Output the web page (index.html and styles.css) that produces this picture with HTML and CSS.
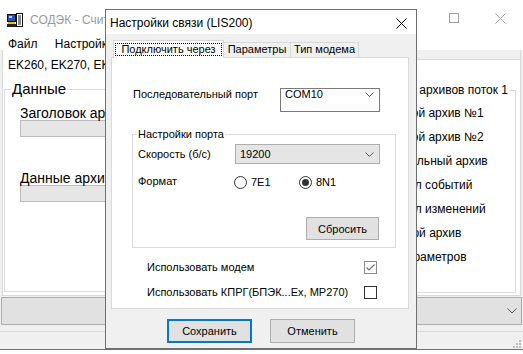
FILE: index.html
```html
<!DOCTYPE html>
<html>
<head>
<meta charset="utf-8">
<meta name="viewport" content="width=device-width">
<title>СОДЭК - Считывание архивов</title>
<link rel="stylesheet" href="styles.css">
</head>
<body>

<div class="app">
  <div class="app-title">
    <svg class="app-icon" width="16" height="15" viewBox="0 0 16 15">
      <rect x="0.5" y="1.5" width="8" height="7" fill="#2a4fc0" stroke="#111"/>
      <rect x="2" y="3" width="3" height="2" fill="#a8d4ff"/>
      <rect x="1" y="9" width="7" height="2" fill="#e8c020"/>
      <rect x="0" y="11" width="9" height="3" fill="#222"/>
      <rect x="9.5" y="0.5" width="6" height="13" fill="#fff" stroke="#111"/>
      <path d="M11 3h3M11 5h3M11 7h3M11 9h3M11 11h3" stroke="#111"/>
    </svg>
    <span class="app-name">СОДЭК - Считывание</span>
    <div class="win-btns">
      <span class="win-btn"><svg width="10" height="10"><path d="M0 5.5h10" stroke="#a0a0a0"/></svg></span>
      <span class="win-btn"><svg width="10" height="10"><rect x="0.5" y="0.5" width="9" height="9" fill="none" stroke="#a0a0a0"/></svg></span>
      <span class="win-btn"><svg width="11" height="11"><path d="M0.5 0.5L10.5 10.5M10.5 0.5L0.5 10.5" stroke="#a0a0a0"/></svg></span>
    </div>
  </div>

  <div class="menubar">
    <span>Файл</span>
    <span>Настройки</span>
  </div>

  <div class="workspace">
    <div class="ws-tabs">
      <div class="ws-tab">EK260, EK270, EK280</div>
      <div class="ws-tabfill"></div>
    </div>
    <div class="ws-content">
      <fieldset class="group data-group">
        <legend>Данные</legend>
        <div class="field-label">Заголовок архивов</div>
        <div class="field-box"></div>
        <div class="field-label second">Данные архивов</div>
        <div class="field-box"></div>
      </fieldset>

      <fieldset class="group arch-group">
        <legend>Чтение архивов поток 1</legend>
        <div class="arch-item">Часовой архив №1</div>
        <div class="arch-item">Часовой архив №2</div>
        <div class="arch-item">Контрольный архив</div>
        <div class="arch-item">Журнал событий</div>
        <div class="arch-item">Журнал изменений</div>
        <div class="arch-item">Дневной архив</div>
        <div class="arch-item">Лог параметров</div>
      </fieldset>
    </div>
  </div>

  <div class="app-combo">
    <svg width="10" height="6"><path d="M0.5 0.5L5 5L9.5 0.5" fill="none" stroke="#555"/></svg>
  </div>

  <div class="statusbar">
    <svg width="8" height="8">
      <rect x="6" y="0" width="2" height="2" fill="#bdbdbd"/>
      <rect x="3" y="3" width="2" height="2" fill="#bdbdbd"/>
      <rect x="6" y="3" width="2" height="2" fill="#bdbdbd"/>
      <rect x="0" y="6" width="2" height="2" fill="#bdbdbd"/>
      <rect x="3" y="6" width="2" height="2" fill="#bdbdbd"/>
      <rect x="6" y="6" width="2" height="2" fill="#bdbdbd"/>
    </svg>
  </div>
</div>

<div class="dialog">
  <div class="dlg-title">
    <span class="dlg-caption">Настройки связи (LIS200)</span>
    <svg class="dlg-close" width="11" height="11" viewBox="0 0 11 11"><path d="M0.5 0.5L10.5 10.5M10.5 0.5L0.5 10.5" stroke="#000"/></svg>
  </div>

  <div class="dlg-body">
    <div class="tabs">
      <div class="tab active"><span>Подключить через</span></div>
      <div class="tab params">Параметры</div>
      <div class="tab modem">Тип модема</div>
    </div>

    <div class="tab-page">
      <div class="port-row">
        <span class="port-label">Последовательный порт</span>
        <div class="combo">
          <span>COM10</span>
          <svg class="chev" width="9" height="5"><path d="M0.5 0.5L4.5 4.5L8.5 0.5" fill="none" stroke="#555"/></svg>
        </div>
      </div>

      <fieldset class="port-group">
        <legend>Настройки порта</legend>
        <div class="speed-row">
          <span class="row-label">Скорость (б/с)</span>
          <div class="combo gray">
            <span>19200</span>
            <svg class="chev" width="9" height="5"><path d="M0.5 0.5L4.5 4.5L8.5 0.5" fill="none" stroke="#555"/></svg>
          </div>
        </div>
        <div class="format-row">
          <span class="row-label fmt">Формат</span>
          <label class="radio"><span class="radio-mark"></span>7E1</label>
          <label class="radio"><span class="radio-mark checked"></span>8N1</label>
        </div>
        <div class="reset-row">
          <button class="btn reset">Сбросить</button>
        </div>
      </fieldset>

      <div class="check-row first">
        <span class="check-label">Использовать модем</span>
        <span class="check-box checked">
          <svg width="11" height="11"><path d="M1.5 5.5L4 8L9.5 2.5" fill="none" stroke="#707070" stroke-width="1.2"/></svg>
        </span>
      </div>
      <div class="check-row">
        <span class="check-label">Использовать КПРГ(БПЭК...Ex, МР270)</span>
        <span class="check-box"></span>
      </div>
    </div>

    <div class="dlg-buttons">
      <button class="btn default">Сохранить</button>
      <button class="btn">Отменить</button>
    </div>
  </div>
</div>

</body>
</html>
```

FILE: styles.css
```css
* {
  box-sizing: border-box;
}
body {
  margin: 0;
  width: 523px;
  height: 354px;
  overflow: hidden;
  position: relative;
  background-color: #fff;
  font-family: "Liberation Sans", Arial, sans-serif;
}

/* main window in the background */
.app {
  width: 523px;
  height: 350px;
  display: flex;
  flex-direction: column;
  background-color: #f0f0f0;
  border-bottom: 1px solid #707070;
}
.app-title {
  height: 30px;
  display: flex;
  align-items: flex-start;
  background-color: #fff;
  color: #9a9a9a;
  font-size: 12px;
  line-height: 14px;
}
.app-icon {
  margin: 13px 7px 0 7px;
}
.app-name {
  flex: 1;
  padding-top: 13px;
}
.win-btns {
  display: flex;
}
.win-btn {
  width: 46px;
  display: flex;
  justify-content: center;
  padding-top: 13px;
}
.menubar {
  height: 20px;
  padding: 8px 0 0 1px;
  background-color: #fff;
  font-size: 12px;
  line-height: 12px;
}
.menubar span {
  padding: 0 7px;
}
.workspace {
  height: 246px;
  margin: 0 2px;
  border: 1px solid #d9d9d9;
  border-top: none;
  background-color: #fff;
}
.ws-tabs {
  height: 26px;
  display: flex;
  align-items: flex-start;
}
.ws-tab {
  width: 250px;
  padding: 8px 0 0 5px;
  font-size: 12px;
  line-height: 15px;
}
.ws-tabfill {
  flex: 1;
  height: 10px;
  background-color: #f0f0f0;
  border-bottom: 1px solid #d9d9d9;
}
.ws-content {
  display: flex;
  justify-content: space-between;
  align-items: flex-start;
  padding: 5px 4px 0 1px;
}
.group {
  margin: 0;
  border: 1px solid #dcdcdc;
  min-width: 0;
}
.data-group {
  width: 300px;
  height: 211px;
  padding: 0 0 0 15px;
}
.data-group legend {
  font-size: 15px;
  line-height: 16px;
  padding: 0 1px;
  margin-left: -9px;
}
.field-label {
  margin-top: 9px;
  font-size: 14px;
  line-height: 14px;
}
.field-label.second {
  margin-top: 34px;
}
.field-box {
  width: 270px;
  height: 17px;
  background-color: #e6e6e6;
  border: 1px solid #bcbcbc;
}
.arch-group {
  width: 176px;
  height: 211px;
  margin-top: 1px;
  padding: 3px 6px 0 4px;
  font-size: 12px;
}
.arch-group legend {
  line-height: 16px;
  padding: 0 1px;
  margin-left: auto;
  margin-right: 0;
  white-space: nowrap;
}
.arch-item {
  line-height: 24px;
  padding-left: 33px;
  white-space: nowrap;
}
.app-combo {
  height: 28px;
  margin: 1px 1px 0 1px;
  display: flex;
  justify-content: flex-end;
  align-items: center;
  padding-right: 4px;
  background-color: #e1e1e1;
  border: 1px solid #adadad;
}
.statusbar {
  height: 18px;
  margin-top: 6px;
  display: flex;
  justify-content: flex-end;
  align-items: flex-end;
  padding: 0 2px 1px 0;
  border-top: 1px solid #d9d9d9;
}

/* dialog window */
.dialog {
  position: absolute;
  left: 105px;
  top: 9px;
  width: 312px;
  height: 340px;
  border: 1px solid #6f6f6f;
  background-color: #f0f0f0;
  font-size: 11px;
  color: #000;
}
.dlg-title {
  height: 24px;
  display: flex;
  justify-content: space-between;
  align-items: flex-start;
  background-color: #fff;
  padding-left: 4px;
  font-size: 12px;
  line-height: 14px;
}
.dlg-caption {
  padding-top: 6px;
}
.dlg-close {
  margin: 8px 9px 0 0;
}
.dlg-body {
  padding: 6px 7px 5px 5px;
}
.tabs {
  height: 18px;
  display: flex;
  align-items: flex-end;
  margin-bottom: -1px;
  padding-left: 2px;
  position: relative;
  z-index: 1;
}
.tab {
  height: 15px;
  margin-bottom: 1px;
  margin-left: -1px;
  border: 1px solid #d9d9d9;
  border-bottom: none;
  background-color: #f0f0f0;
  text-align: center;
  line-height: 13px;
}
.tab.active {
  width: 111px;
  height: 18px;
  margin: 0;
  padding-top: 2px;
  background-color: #fff;
  position: relative;
  z-index: 2;
}
.tab.active span {
  display: inline-block;
  border: 1px dotted #000;
  padding: 0 5px;
  line-height: 11px;
}
.tab.params {
  width: 68px;
}
.tab.modem {
  width: 69px;
}
.tab-page {
  height: 252px;
  border: 1px solid #d9d9d9;
  background-color: #fff;
}
.port-row {
  display: flex;
  align-items: flex-start;
  margin-top: 30px;
  padding-left: 21px;
}
.port-label {
  width: 147px;
  padding-top: 1px;
  line-height: 11px;
}
.combo {
  width: 100px;
  height: 24px;
  display: flex;
  justify-content: space-between;
  align-items: flex-start;
  padding: 0 5px 0 4px;
  border: 1px solid #7a7a7a;
  background-color: #fff;
  line-height: 11px;
}
.combo .chev {
  margin-top: 3px;
}
.combo.gray {
  width: 145px;
  height: 20px;
  align-items: center;
  background-color: #e5e5e5;
  border-color: #adadad;
}
.combo.gray .chev {
  margin-top: 0;
}
.port-group {
  margin: 16px 12px 0 20px;
  padding: 0 15px 7px 5px;
  border: 1px solid #dcdcdc;
  min-width: 0;
}
.port-group legend {
  line-height: 13px;
  padding: 0 1px;
  margin-left: -1px;
}
.speed-row {
  height: 20px;
  margin-top: 3px;
  display: flex;
  align-items: center;
}
.row-label {
  width: 97px;
  line-height: 13px;
}
.row-label.fmt {
  width: 96px;
  margin-top: -2px;
}
.format-row {
  height: 16px;
  margin-top: 10px;
  display: flex;
  align-items: center;
}
.radio {
  width: 65px;
  display: flex;
  align-items: center;
  gap: 4px;
  line-height: 13px;
}
.radio-mark {
  width: 13px;
  height: 13px;
  border: 1px solid #333;
  border-radius: 50%;
  background-color: #fff;
  display: grid;
  place-items: center;
}
.radio-mark.checked::after {
  content: "";
  width: 7px;
  height: 7px;
  border-radius: 50%;
  background-color: #333;
}
.reset-row {
  display: flex;
  justify-content: flex-end;
  margin-top: 27px;
}
.btn {
  font-family: "Liberation Sans", Arial, sans-serif;
  font-size: 11px;
  color: #000;
  background-color: #e1e1e1;
  border: 1px solid #adadad;
  padding: 0;
}
.btn.reset {
  width: 73px;
  height: 23px;
  margin-right: 1px;
}
.check-row {
  height: 16px;
  margin-top: 9px;
  display: flex;
  align-items: center;
  padding-left: 35px;
  line-height: 13px;
}
.check-row.first {
  margin-top: 11px;
}
.check-label {
  width: 217px;
}
.check-box {
  width: 13px;
  height: 13px;
  border: 1px solid #333;
  background-color: #fff;
  display: flex;
}
.check-box.checked {
  border-color: #8c8c8c;
}
.dlg-buttons {
  display: flex;
  justify-content: center;
  gap: 18px;
  margin-top: 10px;
  padding-left: 2px;
}
.dlg-buttons .btn {
  width: 85px;
  height: 24px;
}
.btn.default {
  border: 2px solid #0078d7;
}
```
